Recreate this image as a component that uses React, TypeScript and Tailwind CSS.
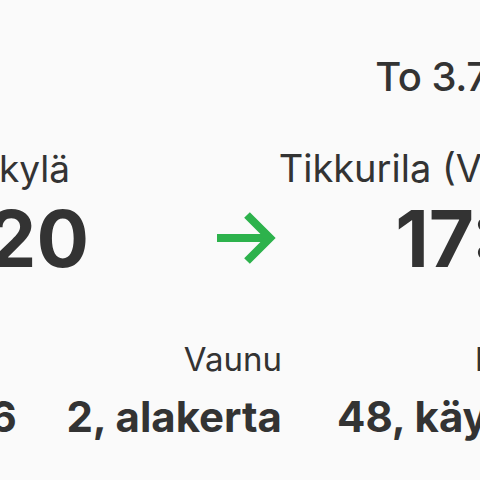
import React from "react";

const ArrowIcon: React.FC = () => (
  <svg width="60" height="54" viewBox="0 0 60 54" fill="none" className="block">
    <path d="M0 27H54" stroke="#2db24c" strokeWidth="8" />
    <path d="M30 4L53 27L30 50" stroke="#2db24c" strokeWidth="8" strokeLinejoin="miter" />
  </svg>
);

interface InfoProps {
  label: string;
  value: string;
  align: "left" | "right";
}

const Info: React.FC<InfoProps> = ({ label, value, align }) => (
  <div className={align === "right" ? "text-right whitespace-nowrap" : "text-left whitespace-nowrap"}>
    <div className="text-[33px] leading-[33px]">{label}</div>
    <div className="mt-[20px] text-[42px] leading-[41px] font-bold">{value}</div>
  </div>
);

export default function App() {
  return (
    <div className="w-[480px] h-[480px] overflow-hidden bg-[#fafafa] text-[#333333] font-['Inter',sans-serif]">
      <div className="ml-[-102px] w-[695px] pt-[57px] whitespace-nowrap">
        <div className="text-right text-[40px] leading-[40px] font-medium tracking-[-0.5px]">To 3.7.2025</div>

        <div className="mt-[53px] flex items-end">
          <div className="w-[170px] shrink-0 flex flex-col items-center">
            <div className="text-[37px] leading-[37px]">Oulunkylä</div>
            <div className="mt-[13px] text-[78px] leading-[77px] font-bold">16:20</div>
          </div>
          <div className="ml-[149px] mb-[12px] shrink-0">
            <ArrowIcon />
          </div>
          <div className="flex-1 flex flex-col items-end">
            <div className="text-[38px] leading-[37px]">Tikkurila (Vantaa)</div>
            <div className="mt-[13px] -mr-[7px] text-[78px] leading-[77px] font-bold">17:05</div>
          </div>
        </div>

        <div className="mt-[66px] pr-[16px] grid grid-cols-[1fr_auto_295px]">
          <Info label="Juna" value="R 356" align="left" />
          <Info label="Vaunu" value="2, alakerta" align="right" />
          <Info label="Paikka" value="48, käytävä" align="right" />
        </div>
      </div>
    </div>
  );
}
